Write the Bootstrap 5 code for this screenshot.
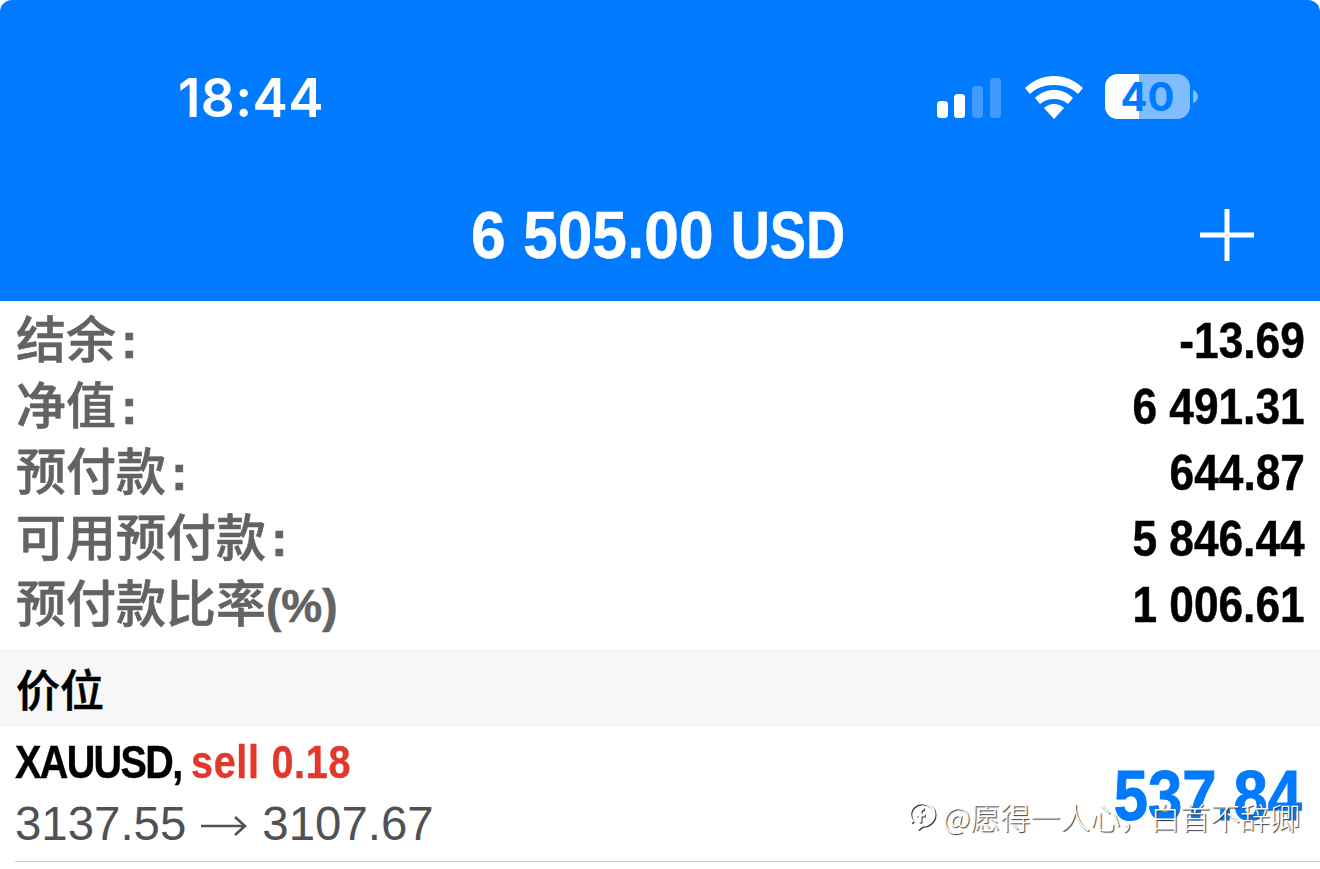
<!DOCTYPE html>
<html lang="en">
<head>
  <meta charset="UTF-8">
  <title>Trade</title>
  <link href="https://cdn.jsdelivr.net/npm/bootstrap@5.3.3/dist/css/bootstrap.min.css" rel="stylesheet">
  <style>
    html, body { height: 869px; overflow: hidden; background: #fff; }
    body { font-family: "Liberation Sans", "Noto Sans CJK SC", sans-serif; position: relative; }
    .app-head { background: #007aff; height: 301px; color: #fff; border-radius: 12px 12px 0 0; }
    .status-row { height: 195px; padding: 73px 121px 0 178px; align-items: flex-start; }
    .clock { font-family: Inter, sans-serif; font-weight: 600; font-size: 53px; line-height: 50px; letter-spacing: .4px; }
    .status-icons { gap: 22px; margin-top: 1px; }
    .sig-icon { margin-right: 1px; }
    .title-row { position: relative; height: 80px; padding-right: 4px; }
    .acct-title { display: inline-block; transform: scaleX(.944); font-weight: 700; font-size: 66px; line-height: 80px; -webkit-text-stroke: .5px #fff; }
    .acct-cur { display: inline-block; transform: scaleX(.87); transform-origin: left center; margin-right: -18px; }
    .plus-btn { position: absolute; left: 1199px; top: 12px; }
    .sum-list { padding: 7px 15px 0 16px; height: 348px; }
    .sum-row { height: 66px; align-items: center; }
    .sum-label { color: #636363; font-size: 50px; line-height: 66px; margin-top: -5px; font-family: "Noto Sans CJK SC", sans-serif; font-weight: 500; -webkit-text-stroke: .6px #636363; }
    .sum-colon { font-family: "Liberation Sans", sans-serif; font-weight: 700; margin-left: 5px; }
    .sum-pct { font-family: "Liberation Sans", sans-serif; font-weight: 700; font-size: 46px; }
    .sum-val { display: inline-block; transform: scaleX(.885); transform-origin: right center; color: #000; font-weight: 700; font-size: 50px; line-height: 66px; -webkit-text-stroke: .5px #000; }
    .sec-head { background: #f7f7f7; height: 78px; padding-left: 16px; font-family: "Noto Sans CJK SC", sans-serif; font-weight: 500; font-size: 44px; line-height: 78px; color: #000; -webkit-text-stroke: .6px #000; }
    .pos-row { height: 135px; margin-left: 15px; padding-right: 18px; border-bottom: 1px solid #c8c8c8; position: relative; }
    .pos-name { transform: scaleX(.86); transform-origin: left center; white-space: nowrap; font-weight: 700; font-size: 46px; line-height: 50px; margin-top: 10px; color: #000; letter-spacing: -1.9px; -webkit-text-stroke: .4px #000; }
    .pos-sell { color: #e2382c; letter-spacing: .8px; -webkit-text-stroke: .4px #e2382c; }
    .pos-price { font-size: 47.4px; line-height: 50px; color: #4f5157; margin-top: 12px; display: flex; align-items: center; white-space: nowrap; }
    .pos-arrow { margin: 4px 15px 0 15px; }
    .pos-profit { display: inline-block; transform: scaleX(.88); transform-origin: right center; color: #007aff; font-weight: 700; font-size: 70px; line-height: 70px; margin-top: 34px; -webkit-text-stroke: 1px #007aff; }
    .wm { position: absolute; left: 908px; top: 798px; color: #fff; font-size: 30px; line-height: 36px; white-space: nowrap; font-family: "Noto Sans CJK SC", sans-serif; font-weight: 300; text-shadow: 1px 1px 1px #333; display: flex; align-items: center; gap: 7px; }
    .wm-icon { filter: drop-shadow(1px 1px 0 #333); }
  </style>
</head>
<body>
  <!-- Blue header -->
  <div class="app-head">
    <div class="status-row d-flex justify-content-between">
      <div class="clock">18:44</div>
      <div class="status-icons d-flex align-items-center">
        <svg class="sig-icon" width="66" height="42" viewBox="0 0 66 42">
          <rect x="1" y="25" width="11" height="17" rx="3.5" fill="#fff"/>
          <rect x="18" y="18" width="11" height="24" rx="3.5" fill="#fff"/>
          <rect x="36" y="10" width="11" height="32" rx="3.5" fill="#fff" fill-opacity=".25"/>
          <rect x="54" y="2" width="11" height="40" rx="3.5" fill="#fff" fill-opacity=".25"/>
        </svg>
        <svg width="58" height="44" viewBox="0 0 58 44">
          <path d="M29 1C18 1 8.500 5 0 13L5 19C11 13 19.500 10 29 10C38.500 10 47 13 53 19L58 13C49.500 5 40 1 29 1Z" fill="#fff"/>
          <path d="M29 15C22 15 15.500 17.500 10 23L15 29C19 25.500 23.800 24 29 24C34.200 24 39 25.500 43 29L48 23C42.500 17.500 36 15 29 15Z" fill="#fff"/>
          <path d="M29 29C25 29 22 30.500 19 33L29 44L39 33C36 30.500 33 29 29 29Z" fill="#fff"/>
        </svg>
        <svg width="94" height="46" viewBox="0 0 94 46">
          <defs><clipPath id="batFill"><rect x="0" y="0" width="34" height="46"/></clipPath></defs>
          <rect x="0" y="0" width="85" height="45" rx="13" fill="#fff" fill-opacity=".5"/>
          <rect x="0" y="0" width="85" height="45" rx="13" fill="#fff" clip-path="url(#batFill)"/>
          <path d="M88 16C91 17 93 19.500 93 22.500C93 25.500 91 28 88 29Z" fill="#fff" fill-opacity=".5"/>
          <text x="42.500" y="37" text-anchor="middle" font-family="Inter, sans-serif" font-weight="700" font-size="40" fill="#007aff">40</text>
        </svg>
      </div>
    </div>
    <div class="title-row text-center">
      <span class="acct-title">6 505.00 <span class="acct-cur">USD</span></span>
      <svg class="plus-btn" width="56" height="56" viewBox="0 0 56 56">
        <path d="M28 2V54M1 28H55" stroke="#fff" stroke-width="5" fill="none"/>
      </svg>
    </div>
  </div>

  <!-- Account summary -->
  <div class="sum-list">
    <div class="sum-row d-flex justify-content-between"><span class="sum-label">结余<span class="sum-colon">:</span></span><span class="sum-val">-13.69</span></div>
    <div class="sum-row d-flex justify-content-between"><span class="sum-label">净值<span class="sum-colon">:</span></span><span class="sum-val">6 491.31</span></div>
    <div class="sum-row d-flex justify-content-between"><span class="sum-label">预付款<span class="sum-colon">:</span></span><span class="sum-val">644.87</span></div>
    <div class="sum-row d-flex justify-content-between"><span class="sum-label">可用预付款<span class="sum-colon">:</span></span><span class="sum-val">5 846.44</span></div>
    <div class="sum-row d-flex justify-content-between"><span class="sum-label">预付款比率<span class="sum-pct">(%)</span></span><span class="sum-val">1 006.61</span></div>
  </div>

  <div class="sec-head">价位</div>

  <!-- Position -->
  <div class="pos-row d-flex justify-content-between">
    <div>
      <div class="pos-name">XAUUSD, <span class="pos-sell">sell 0.18</span></div>
      <div class="pos-price">3137.55
        <svg class="pos-arrow" width="46" height="24" viewBox="0 0 46 24" fill="none" stroke="#4f5157" stroke-width="2.500"><path d="M0 12H44M34 3L44 12L34 21"/></svg>
        3107.67</div>
    </div>
    <div class="pos-profit">537.84</div>
  </div>

  <!-- Watermark -->
  <div class="wm">
    <svg class="wm-icon" width="28" height="34" viewBox="0 0 30 34" fill="none" stroke="#fff" stroke-width="3">
      <path d="M5 24C3 21 2 18 2 15C2 8 8 3 15 3C22 3 28 8 28 15C28 22 22 27 15 27L10 31"/>
      <path d="M17 9C14 9 13 11 13 13V24M9 16H18"/>
    </svg>
    <span>@愿得一人心&#xFF0C;白首不辞卿</span>
  </div>
</body>
</html>
